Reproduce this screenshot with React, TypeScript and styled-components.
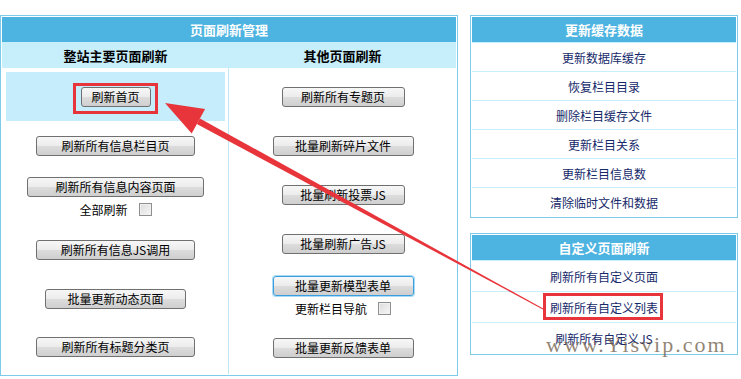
import React from "react";
import styled, { createGlobalStyle } from "styled-components";

const GlobalStyle = createGlobalStyle`
  html, body {
    margin: 0;
    padding: 0;
    background: #ffffff;
  }
  body {
    font-family: "Noto Sans CJK SC", "Noto Sans", sans-serif;
    font-size: 12px;
    color: #000;
  }
`;

const Page = styled.div`
  position: relative;
  width: 741px;
  height: 379px;
  overflow: hidden;
`;

const Layout = styled.div`
  display: flex;
  align-items: flex-start;
  gap: 12px;
  padding-top: 15px;
`;

const Panel = styled.div<{ $width: number }>`
  width: ${(p) => p.$width}px;
  box-sizing: border-box;
  border: 1px solid #7ccbe9;
  padding: 1px;
  background: #fff;
`;

const PanelTitle = styled.div`
  height: 25px;
  background: #4db3e0;
  color: #fff;
  font-weight: bold;
  font-size: 13px;
  display: flex;
  align-items: center;
  justify-content: center;
`;

const SubTitles = styled.div`
  display: grid;
  grid-template-columns: 227px 1fr;
  height: 26px;
  background: #c7eefb;
  font-weight: bold;
  font-size: 13px;
  align-items: center;
  text-align: center;
`;

const Columns = styled.div`
  display: grid;
  grid-template-columns: 226px 1px 1fr;
  height: 306px;
`;

const Divider = styled.div`
  background: #bfe8f7;
`;

const Column = styled.div`
  display: flex;
  flex-direction: column;
  padding: 4px 3px 0 4px;
`;

const Cell = styled.div<{ $h: number; $active?: boolean }>`
  height: ${(p) => p.$h}px;
  flex: none;
  display: flex;
  flex-direction: column;
  align-items: center;
  justify-content: center;
  background: ${(p) => (p.$active ? "#c5edfb" : "transparent")};
`;

const Button = styled.button<{ $w: number; $focused?: boolean }>`
  width: ${(p) => p.$w}px;
  height: 20px;
  box-sizing: border-box;
  padding: 0;
  border: 1px solid ${(p) => (p.$focused ? "#3a9ee0" : "#707070")};
  box-shadow: ${(p) => (p.$focused ? "0 0 0 1px #a9dbf7" : "none")};
  border-radius: 3px;
  background: linear-gradient(#f7f7f7 0%, #ececec 48%, #dcdcdc 52%, #cfcfcf 100%);
  font-family: "Noto Sans CJK SC", sans-serif;
  font-size: 12px;
  line-height: 18px;
  color: #000;
  cursor: pointer;
`;

const CheckRow = styled.label`
  display: flex;
  align-items: center;
  gap: 11px;
  margin-top: 6px;
  font-size: 12px;
  line-height: 14px;
`;

const CheckBox = styled.span`
  width: 11px;
  height: 11px;
  border: 1px solid #8e8f8f;
  background: linear-gradient(135deg, #dcdcdc, #f6f6f6);
  box-shadow: inset 0 0 0 1px #f0f0f0;
`;

const Side = styled.div`
  display: flex;
  flex-direction: column;
  gap: 15px;
`;

const ListRow = styled.div<{ $h: number }>`
  height: ${(p) => p.$h}px;
  box-sizing: border-box;
  display: flex;
  align-items: center;
  justify-content: center;
  color: #16296a;
  font-size: 12px;
  border-top: 1px solid #c7eefb;
  &:first-of-type {
    border-top: none;
  }
`;

const Highlight = styled.div<{ $x: number; $y: number; $w: number; $h: number }>`
  position: absolute;
  left: ${(p) => p.$x}px;
  top: ${(p) => p.$y}px;
  width: ${(p) => p.$w}px;
  height: ${(p) => p.$h}px;
  box-sizing: border-box;
  border: 3px solid #e8353b;
  pointer-events: none;
`;

const Overlay = styled.svg`
  position: absolute;
  left: 0;
  top: 0;
  pointer-events: none;
`;

const Watermark = styled.div`
  position: absolute;
  left: 546px;
  top: 334px;
  font-family: "Liberation Serif", serif;
  font-size: 22px;
  line-height: 22px;
  letter-spacing: 2px;
  color: rgba(110, 92, 72, 0.75);
  pointer-events: none;
`;

type BtnItem = {
  label: string;
  w: number;
  h: number;
  active?: boolean;
  focused?: boolean;
  check?: string;
};

const leftItems: BtnItem[] = [
  { label: "刷新首页", w: 70, h: 49, active: true },
  { label: "刷新所有信息栏目页", w: 159, h: 49 },
  { label: "刷新所有信息内容页面", w: 177, h: 53, check: "全部刷新" },
  { label: "刷新所有信息JS调用", w: 159, h: 53 },
  { label: "批量更新动态页面", w: 141, h: 46 },
  { label: "刷新所有标题分类页", w: 159, h: 49 },
];

const rightItems: BtnItem[] = [
  { label: "刷新所有专题页", w: 123, h: 49 },
  { label: "批量刷新碎片文件", w: 141, h: 49 },
  { label: "批量刷新投票JS", w: 123, h: 49 },
  { label: "批量刷新广告JS", w: 123, h: 49 },
  { label: "批量更新模型表单", w: 141, h: 55, focused: true, check: "更新栏目导航" },
  { label: "批量更新反馈表单", w: 141, h: 49 },
];

const cacheItems = [
  "更新数据库缓存",
  "恢复栏目目录",
  "删除栏目缓存文件",
  "更新栏目关系",
  "更新栏目信息数",
  "清除临时文件和数据",
];

const customItems = ["刷新所有自定义页面", "刷新所有自定义列表", "刷新所有自定义JS"];

const ButtonColumn: React.FC<{ items: BtnItem[] }> = ({ items }) => (
  <Column>
    {items.map((it) => (
      <Cell key={it.label} $h={it.h} $active={it.active}>
        <Button $w={it.w} $focused={it.focused}>
          {it.label}
        </Button>
        {it.check && (
          <CheckRow>
            {it.check}
            <CheckBox />
          </CheckRow>
        )}
      </Cell>
    ))}
  </Column>
);

// 尾部细、箭头处粗的红色箭头
const Arrow: React.FC = () => {
  const tail = { x: 543, y: 309 };
  const tip = { x: 165, y: 103 };
  const dx = tip.x - tail.x;
  const dy = tip.y - tail.y;
  const len = Math.hypot(dx, dy);
  const ux = dx / len;
  const uy = dy / len;
  const nx = -uy;
  const ny = ux;
  const headLen = 38;
  const headHalf = 14;
  const bx = tip.x - ux * headLen;
  const by = tip.y - uy * headLen;
  const pt = (x: number, y: number) => `${x.toFixed(1)},${y.toFixed(1)}`;
  const shaft = [
    pt(tail.x + nx * 0.5, tail.y + ny * 0.5),
    pt(bx + nx * 3.2, by + ny * 3.2),
    pt(bx - nx * 3.2, by - ny * 3.2),
    pt(tail.x - nx * 0.5, tail.y - ny * 0.5),
  ].join(" ");
  const head = [
    pt(tip.x, tip.y),
    pt(bx + nx * headHalf, by + ny * headHalf),
    pt(bx - nx * headHalf, by - ny * headHalf),
  ].join(" ");
  return (
    <Overlay width={741} height={379}>
      <polygon points={shaft} fill="#e8353b" />
      <polygon points={head} fill="#e8353b" />
    </Overlay>
  );
};

export default function App() {
  return (
    <Page>
      <GlobalStyle />
      <Layout>
        <Panel $width={458}>
          <PanelTitle>页面刷新管理</PanelTitle>
          <SubTitles>
            <div>整站主要页面刷新</div>
            <div>其他页面刷新</div>
          </SubTitles>
          <Columns>
            <ButtonColumn items={leftItems} />
            <Divider />
            <ButtonColumn items={rightItems} />
          </Columns>
        </Panel>
        <Side>
          <Panel $width={268}>
            <PanelTitle>更新缓存数据</PanelTitle>
            {cacheItems.map((t) => (
              <ListRow key={t} $h={29}>
                {t}
              </ListRow>
            ))}
          </Panel>
          <Panel $width={268}>
            <PanelTitle>自定义页面刷新</PanelTitle>
            {customItems.map((t) => (
              <ListRow key={t} $h={31}>
                {t}
              </ListRow>
            ))}
          </Panel>
        </Side>
      </Layout>
      <Highlight $x={73} $y={83} $w={85} $h={31} />
      <Highlight $x={543} $y={293} $w={120} $h={27} />
      <Arrow />
      <Watermark>www.Yisvip.com</Watermark>
    </Page>
  );
}
